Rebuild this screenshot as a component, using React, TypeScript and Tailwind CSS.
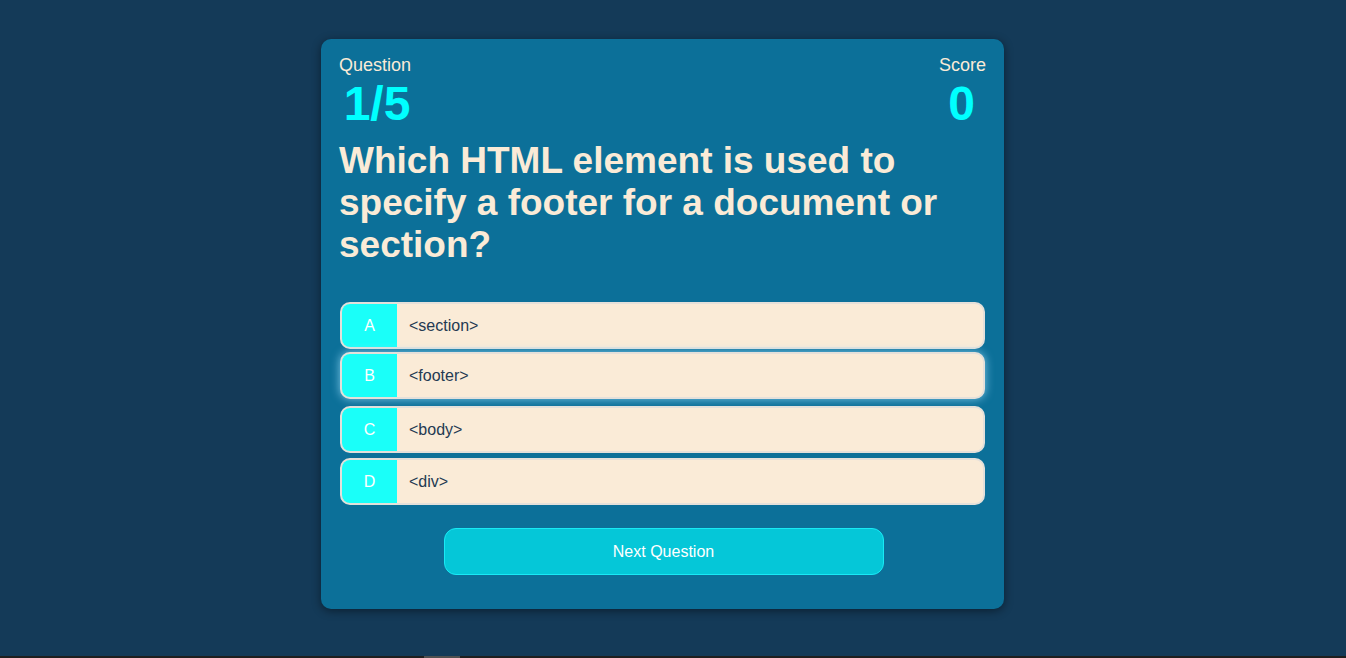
const options = [
  { letter: "A", text: "<section>" },
  { letter: "B", text: "<footer>", hover: true },
  { letter: "C", text: "<body>" },
  { letter: "D", text: "<div>" },
];

export default function App() {
  return (
    <div className="h-screen flex flex-col bg-[#143a58] font-['Liberation_Sans',Arial,sans-serif]">
      <main className="flex-1 flex justify-center pt-[39px] pr-[21px]">
        <div className="w-[683px] h-[570px] rounded-[10px] bg-[#0c7099] shadow-[0_2px_10px_rgba(0,0,0,0.45)] px-[18px] pt-[16px] pb-[34px] flex flex-col">
          {/* header */}
          <div className="flex justify-between">
            <div className="flex flex-col items-center">
              <span className="text-[18px] leading-[21px] text-[#faebd7]">Question</span>
              <span className="text-[48px] leading-[55px] font-bold text-[#00ffff] pl-[4px]">1/5</span>
            </div>
            <div className="flex flex-col items-center">
              <span className="text-[18px] leading-[21px] text-[#faebd7]">Score</span>
              <span className="text-[48px] leading-[55px] font-bold text-[#00ffff] pr-[2px]">0</span>
            </div>
          </div>

          <h1 className="mt-[9px] text-[37px] leading-[42px] font-bold text-[#faebd7]">
            Which HTML element is used to specify a footer for a document or section?
          </h1>

          {/* options */}
          <div className="mt-[36px] flex flex-col gap-[5px] px-[1px]">
            {options.map((o) => (
              <div
                key={o.letter}
                className={`flex h-[47px] rounded-[10px] border-2 border-[#e4e0da] overflow-hidden bg-[#faebd7] ${
                  o.hover ? "-translate-y-[2px] shadow-[0_0_10px_rgba(160,225,255,0.75)]" : ""
                }`}
              >
                <div className="w-[55px] shrink-0 bg-[#1afff9] flex items-center justify-center text-[16px] text-white">
                  {o.letter}
                </div>
                <div className="flex items-center pl-[12px] text-[16px] text-[#243a52]">{o.text}</div>
              </div>
            ))}
          </div>

          <div className="mt-[23px] flex justify-center">
            <button className="w-[440px] h-[47px] rounded-[12px] border border-[#19e9f5] bg-[#05c7d8] text-white text-[16px] ml-[2px]">
              Next Question
            </button>
          </div>
        </div>
      </main>
      <div className="h-[2px] bg-[#1f1f1f] flex">
        <div className="ml-[424px] w-[36px] bg-[#505050]" />
      </div>
    </div>
  );
}
